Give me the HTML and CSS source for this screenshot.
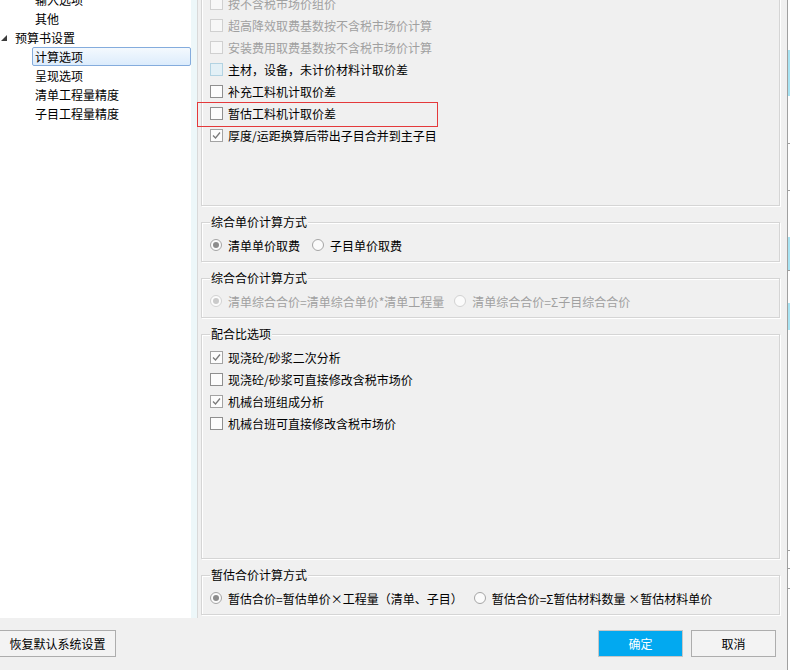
FILE: index.html
```html
<!DOCTYPE html>
<html lang="zh-CN">
<head>
<meta charset="utf-8">
<title>预算书设置</title>
<link rel="stylesheet" href="styles.css">
</head>
<body>
<div class="screen">
  <div class="dialog">
    <div class="main">
      <div class="tree">
        <ul class="tree-list">
          <li class="node lvl2">输入选项</li>
          <li class="node lvl2">其他</li>
          <li class="node lvl1"><svg class="twisty" viewBox="0 0 6 6"><polygon points="6,0 6,6 0,6" fill="#3c3c3c"/></svg>预算书设置</li>
          <li class="node lvl2 selected"><span class="sel">计算选项</span></li>
          <li class="node lvl2">呈现选项</li>
          <li class="node lvl2">清单工程量精度</li>
          <li class="node lvl2">子目工程量精度</li>
        </ul>
      </div>
      <div class="splitter"></div>
      <div class="options">
        <div class="group group-top">
          <div class="row disabled"><span class="cb"></span><span>按不含税市场价组价</span></div>
          <div class="row disabled"><span class="cb"></span><span>超高降效取费基数按不含税市场价计算</span></div>
          <div class="row disabled"><span class="cb"></span><span>安装费用取费基数按不含税市场价计算</span></div>
          <div class="row"><span class="cb cb-hot"></span><span>主材，设备，未计价材料计取价差</span></div>
          <div class="row"><span class="cb"></span><span>补充工料机计取价差</span></div>
          <div class="row"><span class="cb"></span><span>暂估工料机计取价差</span></div>
          <div class="row"><span class="cb cb-on"><svg viewBox="0 0 11 11"><polyline points="2,5.5 4.5,8 9,2.5" fill="none" stroke="#7a7a7a" stroke-width="1.3"/></svg></span><span>厚度/运距换算后带出子目合并到主子目</span></div>
        </div>
        <div class="group">
          <div class="legend">综合单价计算方式</div>
          <div class="row radios">
            <span class="opt"><span class="rb on"></span><span>清单单价取费</span></span>
            <span class="opt"><span class="rb"></span><span>子目单价取费</span></span>
          </div>
        </div>
        <div class="group">
          <div class="legend">综合合价计算方式</div>
          <div class="row radios disabled">
            <span class="opt opt-b"><span class="rb on"></span><span>清单综合合价=清单综合单价*清单工程量</span></span>
            <span class="opt"><span class="rb"></span><span>清单综合合价=Σ子目综合合价</span></span>
          </div>
        </div>
        <div class="group group-fill">
          <div class="legend">配合比选项</div>
          <div class="row"><span class="cb cb-on"><svg viewBox="0 0 11 11"><polyline points="2,5.5 4.5,8 9,2.5" fill="none" stroke="#7a7a7a" stroke-width="1.3"/></svg></span><span>现浇砼/砂浆二次分析</span></div>
          <div class="row"><span class="cb"></span><span>现浇砼/砂浆可直接修改含税市场价</span></div>
          <div class="row"><span class="cb cb-on"><svg viewBox="0 0 11 11"><polyline points="2,5.5 4.5,8 9,2.5" fill="none" stroke="#7a7a7a" stroke-width="1.3"/></svg></span><span>机械台班组成分析</span></div>
          <div class="row"><span class="cb"></span><span>机械台班可直接修改含税市场价</span></div>
        </div>
        <div class="group">
          <div class="legend">暂估合价计算方式</div>
          <div class="row radios">
            <span class="opt opt-c"><span class="rb on"></span><span>暂估合价=暂估单价×工程量（清单、子目）</span></span>
            <span class="opt"><span class="rb"></span><span>暂估合价=Σ暂估材料数量 ×暂估材料单价</span></span>
          </div>
        </div>
      </div>
      <div class="mark"></div>
    </div>
    <div class="footer">
      <button class="btn btn-reset">恢复默认系统设置</button>
      <div class="actions">
        <button class="btn btn-ok">确定</button>
        <button class="btn btn-cancel">取消</button>
      </div>
    </div>
  </div>
  <div class="backdrop"></div>
</div>
</body>
</html>
```
FILE: styles.css
```css
* { box-sizing: border-box; }
html, body { margin: 0; padding: 0; }
body {
  width: 790px;
  height: 670px;
  overflow: hidden;
  background: #fff;
  font-family: "Noto Sans CJK SC", "Microsoft YaHei", sans-serif;
  font-size: 12px;
  color: #000;
}
.screen { display: flex; height: 670px; }
.dialog {
  width: 788px;
  height: 670px;
  border-right: 1px solid #a0a0a0;
  display: flex;
  flex-direction: column;
  background: #f0f0f0;
}
.main { height: 618px; display: flex; position: relative; flex: none; }

/* tree */
.tree { width: 191px; background: #fff; overflow: hidden; flex: none; }
.tree-list { margin: -10px 0 0 0; padding: 0; list-style: none; }
.node { height: 19px; line-height: 19px; white-space: nowrap; }
.lvl1 { padding-left: 1px; display: flex; align-items: center; }
.twisty { width: 6px; height: 6px; margin-right: 8px; flex: none; }
.lvl2 { padding-left: 35px; }
.lvl2.selected { padding-left: 32px; }
.sel {
  display: block;
  height: 19px;
  line-height: 17px;
  border: 1px solid #84acdd;
  border-radius: 2px;
  padding-left: 2px;
  background: linear-gradient(#f4f9fe, #dcecfc);
}
.splitter { width: 6px; background: #edf7f9; flex: none; }

/* options */
.options {
  width: 590px;
  flex: none;
  border-left: 1px solid #d9d9d9;
  padding: 0 7px 3px 3px;
  display: flex;
  flex-direction: column;
  overflow: hidden;
  background: #f0f0f0;
}
.group {
  border: 1px solid #d5d5d5;
  box-shadow: inset 1px 1px 0 #fff, 1px 1px 0 #fff;
  padding: 0 0 5px 8px;
  margin-top: 16px;
  display: flex;
  flex-direction: column;
  flex: none;
}
.group-top { margin-top: -20px; height: 226px; padding-top: 11px; }
.group-fill { flex: 1 1 auto; }
.legend {
  align-self: flex-start;
  margin: -9px 0 4px 0;
  padding: 0 1px;
  height: 16px;
  line-height: 16px;
  background: #f0f0f0;
}
.row {
  height: 22px;
  display: flex;
  align-items: center;
  gap: 5px;
  white-space: nowrap;
  flex: none;
}
.row.radios { gap: 0; }
.disabled { color: #a0a0a0; }
.cb {
  width: 13px;
  height: 13px;
  border: 1px solid #8f8f8f;
  background: #fcfcfc;
  flex: none;
  display: flex;
}
.cb svg { width: 11px; height: 11px; }
.disabled .cb { border-color: #d0d0d0; background: #f7f7f7; }
.cb-hot { border-color: #b3d3e2; background: #e3f0f6; }
.cb-on { border-color: #a3a3a3; }
.opt { display: flex; align-items: center; gap: 6px; margin-right: 12px; }
.opt-b { margin-right: 10px; }
.opt-c { margin-right: 11px; }
.rb {
  width: 12px;
  height: 12px;
  border-radius: 50%;
  border: 1px solid #a5a5a5;
  background: #fbfbfb;
  display: flex;
  align-items: center;
  justify-content: center;
  flex: none;
}
.rb.on::after {
  content: "";
  width: 6px;
  height: 6px;
  border-radius: 50%;
  background: #8c8c8c;
}
.disabled .rb { border-color: #d2d2d2; }
.disabled .rb.on::after { background: #cacaca; }

.mark {
  position: absolute;
  left: 197px;
  top: 102px;
  width: 241px;
  height: 25px;
  border: 1px solid #e4393b;
}

/* footer */
.footer {
  height: 52px;
  flex: none;
  padding: 12px 11px 0 0;
  display: flex;
  align-items: flex-start;
}
.btn {
  height: 27px;
  border: 1px solid #adadad;
  background: #f3f3f3;
  font: inherit;
  color: #000;
  padding: 0;
  line-height: 25px;
  text-align: center;
}
.btn-reset { margin-left: -1px; width: 117px; }
.actions { margin-left: auto; display: flex; gap: 8px; }
.btn-ok, .btn-cancel { width: 85px; }
.btn-ok { background: #02a9f0; color: #fff; border-color: #c6c6c6; }

.backdrop {
  width: 2px;
  flex: none;
  background: linear-gradient(to bottom,
    #fff 0 50px, #a8e3f2 50px 96px, #fff 96px 143px, #a0a0a0 143px 144px,
    #fff 144px 190px, #a0a0a0 190px 191px, #fff 191px 237px, #a8e3f2 237px 270px,
    #a0a0a0 270px 271px, #fff 271px 303px, #a8e3f2 303px 330px, #fff 330px 550px,
    #a0a0a0 550px 551px, #fff 551px 568px, #a0a0a0 568px 569px, #fff 569px 588px,
    #a0a0a0 588px 589px, #fff 589px);
}
```
